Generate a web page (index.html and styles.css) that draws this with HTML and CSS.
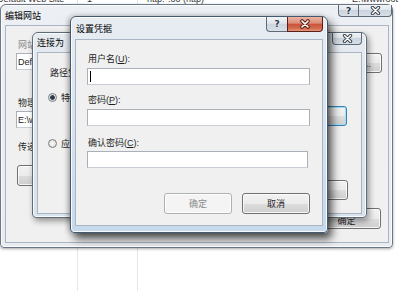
FILE: index.html
```html
<!DOCTYPE html>
<html lang="zh">
    <head>
        <meta charset="UTF-8">
        <title>设置凭据</title>
        <link rel="stylesheet" href="styles.css">
    </head>
    <body>
        <div class="desk">
            <div class="list-row">
                <span class="col-name">Default Web Site</span>
                <span class="col-id">1</span>
                <span class="col-bind">http:*:80 (http)</span>
                <span class="col-path">E:\wwwroot</span>
            </div>

            <!-- 編輯網站 -->
            <div class="win win-back">
                <div class="title">
                    <span class="title-text">编辑网站</span>
                    <div class="caps caps-back">
                        <span class="cap cap-help">?</span>
                        <span class="cap cap-close">
                            <svg width="11" height="9" viewBox="0 0 11 9"><path d="M2.5 1.5 8.5 7.5M8.5 1.5 2.5 7.5" stroke="#3b434c" stroke-width="3.4" stroke-linecap="round"/><path d="M2.5 1.5 8.5 7.5M8.5 1.5 2.5 7.5" stroke="#fff" stroke-width="1.5" stroke-linecap="round"/></svg>
                        </span>
                    </div>
                </div>
                <div class="client back-client">
                    <div class="label dim">网站名称(S):</div>
                    <div class="row row-first">
                        <div class="field field-back">Default Web Site</div>
                        <div class="btn btn-side">选择(E)...</div>
                    </div>
                    <div class="label label-path">物理路径(P):</div>
                    <div class="row row-path">
                        <div class="field field-back">E:\wwwroot</div>
                    </div>
                    <div class="label label-pass">传递身份验证</div>
                    <div class="btn btn-conn">连接为(C)...</div>
                    <div class="foot foot-back">
                        <div class="btn btn-wide">确定</div>
                    </div>
                </div>
            </div>

            <!-- 連接為 -->
            <div class="win win-mid">
                <div class="title title-mid">
                    <span class="title-text">连接为</span>
                    <div class="caps">
                        <span class="cap cap-close cap-single">
                            <svg width="11" height="9" viewBox="0 0 11 9"><path d="M2.5 1.5 8.5 7.5M8.5 1.5 2.5 7.5" stroke="#3b434c" stroke-width="3.4" stroke-linecap="round"/><path d="M2.5 1.5 8.5 7.5M8.5 1.5 2.5 7.5" stroke="#fff" stroke-width="1.5" stroke-linecap="round"/></svg>
                        </span>
                    </div>
                </div>
                <div class="client mid-client">
                    <div class="label">路径凭据:</div>
                    <div class="choice choice-first">
                        <span class="radio on"></span>
                        <span>特定用户(S):</span>
                    </div>
                    <div class="btn btn-focus btn-set">设置(E)...</div>
                    <div class="choice choice-second">
                        <span class="radio"></span>
                        <span>应用程序用户(A)</span>
                    </div>
                    <div class="foot foot-mid">
                        <div class="btn">确定</div>
                        <div class="btn">取消</div>
                    </div>
                </div>
            </div>

            <!-- 設置憑據 -->
            <div class="win win-front">
                <div class="title title-front">
                    <span class="title-text">设置凭据</span>
                    <div class="caps">
                        <span class="cap cap-help cap-help-front">?</span>
                        <span class="cap cap-close cap-red">
                            <svg width="12" height="10" viewBox="0 0 12 10"><path d="M3 2 9 8M9 2 3 8" stroke="#5a1a10" stroke-width="3.6" stroke-linecap="round"/><path d="M3 2 9 8M9 2 3 8" stroke="#fff" stroke-width="1.7" stroke-linecap="round"/></svg>
                        </span>
                    </div>
                </div>
                <div class="client front-client">
                    <div class="label">用户名(<u>U</u>):</div>
                    <div class="field field-user"><span class="caret"></span></div>
                    <div class="label label-pwd">密码(<u>P</u>):</div>
                    <div class="field field-pwd"></div>
                    <div class="label label-confirm">确认密码(<u>C</u>):</div>
                    <div class="field field-confirm"></div>
                    <div class="foot foot-front">
                        <div class="btn btn-off">确定</div>
                        <div class="btn">取消</div>
                    </div>
                </div>
            </div>
        </div>
    </body>
</html>
```

FILE: styles.css
```css
/*
  三層對話框：编辑网站 -> 连接为 -> 设置凭据
  視窗本身用 absolute 疊在桌面上，視窗內部都用 flex 排版
*/

* {
    box-sizing: border-box;
}

body {
    margin: 0;
    background: #fff;
    font-family: "Liberation Sans", "Noto Sans CJK SC", sans-serif;
    font-size: 9px;
    color: #1e1e1e;
}

.desk {
    position: relative;
    width: 400px;
    height: 291px;
    overflow: hidden;
    background:
        linear-gradient(#e6e6e6, #e6e6e6) 77px 0 / 1px 100% no-repeat,
        linear-gradient(#e6e6e6, #e6e6e6) 137px 0 / 1px 100% no-repeat,
        #fff;
}

/* 後面列表的那一行，只露出下半截 */
.list-row {
    display: flex;
    height: 9px;
    margin-top: -5px;
    line-height: 9px;
    color: #333;
    white-space: nowrap;
}

.col-name {
    width: 90px;
    margin-left: -3px;
}

.col-id {
    width: 60px;
}

.col-bind {
    width: 205px;
}

/* ---------- 視窗外框 ---------- */

.win {
    position: absolute;
    display: flex;
    flex-direction: column;
    border: 1px solid #6b7785;
    border-radius: 6px 6px 4px 4px;
    background: linear-gradient(#e6ebf0, #dfe6ee 40%, #d9e3ed);
}

.win-back {
    left: 0;
    top: 4px;
    width: 393px;
    height: 244px;
    padding: 0 3px 4px 4px;
    background: linear-gradient(#eceff3, #e8ecf0);
    box-shadow: 0 1px 3px rgba(0, 0, 0, .35), inset 0 0 0 1px rgba(255, 255, 255, .8);
}

.win-mid {
    left: 32px;
    top: 32px;
    width: 335px;
    height: 186px;
    padding: 0 4px 3px 4px;
    border-color: #5e6b79;
    box-shadow: 2px 3px 6px rgba(0, 0, 0, .4), inset 0 0 0 1px rgba(255, 255, 255, .8);
}

.win-front {
    left: 70px;
    top: 16px;
    width: 258px;
    height: 217px;
    padding: 0 4px 6px 4px;
    border-color: #45596e;
    background: linear-gradient(#e8edf2, #dbe5ef 40%, #c6d9ec);
    box-shadow: 4px 6px 8px rgba(0, 0, 0, .65), -2px 0 5px rgba(0, 0, 0, .25), inset 0 0 0 1px rgba(255, 255, 255, .85);
}

.title {
    display: flex;
    align-items: center;
    flex: none;
    height: 20px;
}

.title-mid {
    height: 19px;
}

.title-front {
    height: 22px;
}

.title-front .title-text {
    padding-left: 1px;
}

.title-text {
    color: #000;
}

/* 標題列右上角的按鈕 */
.caps {
    display: flex;
    align-self: flex-start;
    margin-left: auto;
}

.caps-back {
    margin-right: -3px;
}

.cap {
    display: flex;
    align-items: center;
    justify-content: center;
    height: 12px;
    border: 1px solid #5f6b78;
    border-top: 0;
    background: linear-gradient(#f1f4f7, #e0e6ec 45%, #cbd4de 50%, #d8dfe7);
}

.cap-help {
    width: 20px;
    border-right: 0;
    border-radius: 0 0 0 4px;
    font: bold 9px "DejaVu Sans", sans-serif;
    color: #2d3540;
    text-shadow: 0 0 2px #fff;
}

.cap-close {
    width: 34px;
    border-radius: 0 0 4px 0;
}

.cap-single {
    width: 30px;
    border-radius: 0 0 4px 4px;
}

.cap-help-front {
    width: 21px;
    height: 15px;
}

.cap-red {
    width: 36px;
    height: 15px;
    border-color: #5b2118;
    background: linear-gradient(#ebb4a4, #d98c76 45%, #c7533a 50%, #d46a4c 80%, #e29778);
}

/* ---------- 視窗內容 ---------- */

.client {
    display: flex;
    flex-direction: column;
    flex: 1;
    border: 1px solid #a9b5c3;
    background: #f0f0f0;
    overflow: hidden;
}

.label {
    height: 10px;
    line-height: 10px;
    white-space: nowrap;
}

.label u {
    text-decoration: underline;
}

.dim {
    color: #8a8a8a;
}

.field {
    display: flex;
    align-items: center;
    height: 17px;
    padding-left: 1px;
    background: #fff;
    border: 1px solid #a9b0b8;
    border-bottom-color: #c9ced6;
    white-space: nowrap;
}

.btn {
    display: flex;
    align-items: center;
    justify-content: center;
    flex: none;
    width: 68px;
    height: 21px;
    border: 1px solid #707070;
    border-radius: 3px;
    background: linear-gradient(#f2f2f2, #ebebeb 50%, #dddddd 51%, #cfcfcf);
    box-shadow: inset 0 0 0 1px rgba(255, 255, 255, .8);
    white-space: nowrap;
}

.btn-off {
    border-color: #adb2b5;
    background: #f4f4f4;
    color: #8a8a8a;
}

.btn-focus {
    border-color: #3c7fb1;
    box-shadow: inset 0 0 0 1px #9fe0f7;
}

.foot {
    display: flex;
    justify-content: flex-end;
    gap: 10px;
}

.row {
    display: flex;
    justify-content: space-between;
}

/* 编辑网站 */
.back-client {
    padding: 14px 6px 0 10px;
}

.back-client .label {
    padding-left: 2px;
}

.row-first {
    margin-top: 3px;
}

.field-back {
    width: 160px;
    padding-left: 1px;
}

.btn-side {
    width: 60px;
    height: 20px;
}

.label-path {
    margin-top: 25px;
}

.row-path {
    margin-top: 3px;
}

.label-pass {
    margin-top: 14px;
}

.btn-conn {
    width: 80px;
    margin: 13px 0 0 1px;
}

.foot-back {
    margin: 22px 1px 0 0;
}

.btn-wide {
    width: 69px;
    padding-top: 3px;
}

/* 连接为 */
.mid-client {
    padding: 15px 14px 0 12px;
}

.choice {
    display: flex;
    align-items: center;
    gap: 4px;
    height: 10px;
    margin-left: -2px;
    white-space: nowrap;
}

.choice-first {
    margin-top: 14px;
}

.choice-second {
    margin-top: 12px;
}

.radio {
    width: 9px;
    height: 9px;
    border: 1px solid #7c7c7c;
    border-radius: 50%;
    background: radial-gradient(circle, #fdfdfd, #d6d6d6);
}

.radio.on {
    background: radial-gradient(circle, #2c3c4a 0 2px, #dfe4e9 2.6px);
}

.btn-set {
    align-self: flex-end;
    width: 76px;
    height: 20px;
    margin-top: 4px;
}

.foot-mid {
    margin: 32px -1px 0 0;
}

.foot-mid .btn {
    height: 20px;
}

/* 设置凭据 */
.front-client {
    padding: 14px 12px 0 11px;
}

.front-client .label {
    padding-left: 1px;
}

.field-user {
    margin-top: 4px;
}

.caret {
    width: 1px;
    height: 11px;
    margin-left: 1px;
    background: #000;
}

.label-pwd {
    margin-top: 10px;
}

.field-pwd {
    margin-top: 4px;
}

.label-confirm {
    margin-top: 12px;
}

.field-confirm {
    width: 221px;
    margin-top: 3px;
}

.foot-front {
    margin-top: 25px;
}
```
